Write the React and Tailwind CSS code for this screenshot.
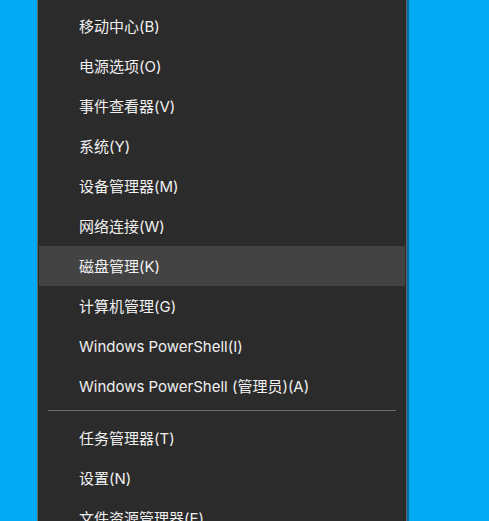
import React from "react";

const groupA = [
  "移动中心(B)",
  "电源选项(O)",
  "事件查看器(V)",
  "系统(Y)",
  "设备管理器(M)",
  "网络连接(W)",
  "磁盘管理(K)",
  "计算机管理(G)",
  "Windows PowerShell(I)",
  "Windows PowerShell (管理员)(A)",
];
const groupB = ["任务管理器(T)", "设置(N)", "文件资源管理器(E)"];

function Item({ label, active }) {
  return (
    <div
      className={
        "mx-[1px] flex h-[40px] shrink-0 items-center pl-[40px] pt-[2px] text-[15px] text-[#f0f0f0] " +
        (active ? "bg-[#434343]" : "")
      }
    >
      {label}
    </div>
  );
}

export default function App() {
  return (
    <div
      className="flex h-[521px] w-[489px] overflow-hidden bg-[#02aaf3] pl-[37px]"
      style={{ fontFamily: 'Inter, "Noto Sans CJK SC", sans-serif' }}
    >
      <div className="flex h-full w-[370px] flex-col overflow-hidden border-x border-[#5c6770] bg-[#2b2b2b] pt-[6px] shadow-[2px_0_0_rgba(0,40,70,0.45)]">
        {groupA.map((l) => (
          <Item key={l} label={l} active={l === "磁盘管理(K)"} />
        ))}
        <div className="flex h-[12px] shrink-0 items-start px-[10px] pt-[4px]">
          <div className="h-px w-full bg-[#6b6b6b]" />
        </div>
        {groupB.map((l) => (
          <Item key={l} label={l} />
        ))}
      </div>
    </div>
  );
}
